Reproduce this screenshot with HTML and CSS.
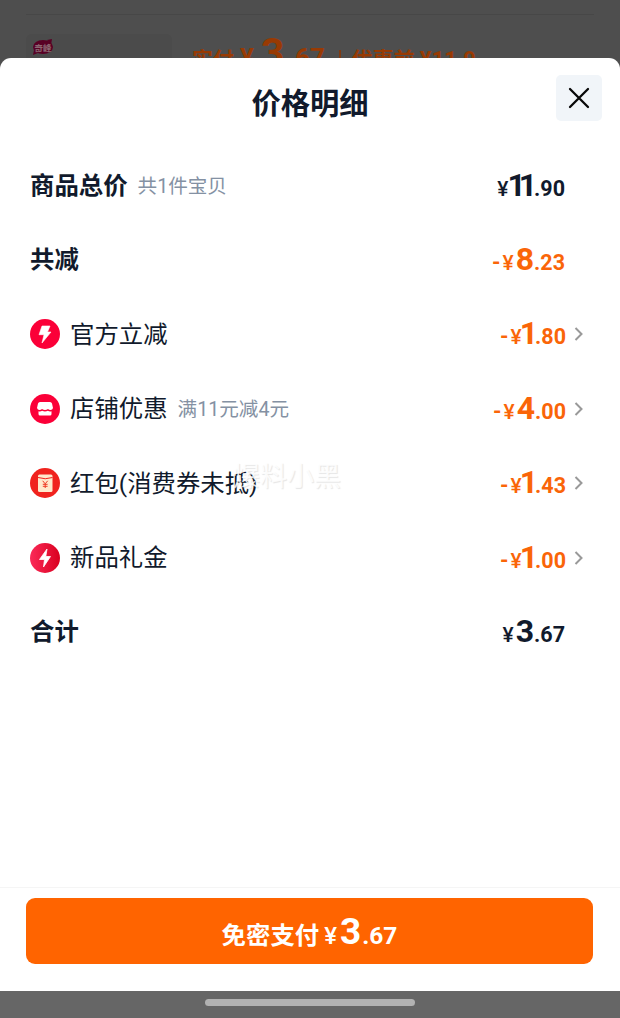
FILE: index.html
```html
<!DOCTYPE html>
<html lang="zh-CN">
<head>
    <meta charset="UTF-8">
    <meta name="viewport" content="width=device-width, initial-scale=1.0">
    <title>价格明细</title>
    <link rel="stylesheet" href="styles.css">
</head>
<body>

<!-- Order page behind the sheet -->
<div class="page">
    <div class="page-line"></div>
    <div class="page-row">
        <div class="thumb">
            <svg width="22" height="18" viewBox="0 0 22 18">
                <ellipse cx="11" cy="9" rx="10" ry="7" fill="#590025"/>
                <path d="M2 12l-1 5 5-2M15 2l5-1-1 6" fill="#590025"/>
                <text x="2.500" y="12.5" class="thumb-text">奇峰</text>
            </svg>
        </div>
        <div class="page-price"><span>实付</span><span class="page-yen">¥</span><span class="page-num">3</span><span class="page-dec">.67</span><span class="page-bar"></span><span>优惠前</span><span class="page-old">¥11.9</span></div>
    </div>
</div>

<!-- Price detail sheet -->
<div class="sheet">
    <div class="header">
        <h1>价格明细</h1>
        <button class="close" aria-label="关闭">
            <svg width="22" height="22" viewBox="0 0 22 22"><path d="M2 2l18 18M20 2L2 20" stroke="#080808" stroke-width="2.3" stroke-linecap="round"/></svg>
        </button>
    </div>

    <div class="list">
        <div class="row total">
            <div class="label">商品总价</div>
            <div class="note">共1件宝贝</div>
            <div class="price"><span class="yen">¥</span><span class="num ones">11</span><span class="dec">.90</span></div>
        </div>
        <div class="row total">
            <div class="label">共减</div>
            <div class="price minus"><span class="sign">-</span><span class="yen">¥</span><span class="num">8</span><span class="dec">.23</span></div>
        </div>
        <div class="row">
            <svg class="icon" viewBox="0 0 30 30"><circle cx="15" cy="15" r="15" fill="#fb0038"/><path d="M12 7h8l-2.500 6H21l-9 11 2-8.300H9z" fill="#fff" stroke="#fff" stroke-width=".6" stroke-linejoin="round"/></svg>
            <div class="label">官方立减</div>
            <div class="price minus"><span class="sign">-</span><span class="yen">¥</span><span class="num one">1</span><span class="dec">.80</span></div>
            <svg class="arrow" viewBox="0 0 10 16"><path d="M1.500 2l6 6-6 6"/></svg>
        </div>
        <div class="row">
            <svg class="icon" viewBox="0 0 30 30"><circle cx="15" cy="15" r="15" fill="#fb0038"/><path d="M10 8h10q1.500 0 2 1.500l1 4.500q-.5 2-2.500 2-1.500 0-2.500-1-1.500 1-3 1t-3-1q-1 1-2.500 1-2 0-2.500-2l1-4.500Q8.500 8 10 8zM8.500 17.300q2 .6 3.600-.5 2.900 1.300 5.800 0 1.600 1.100 3.600.5v2.700q0 1.500-1.500 1.500H10q-1.500 0-1.500-1.500z" fill="#fff"/></svg>
            <div class="label">店铺优惠</div>
            <div class="note">满11元减4元</div>
            <div class="price minus"><span class="sign">-</span><span class="yen">¥</span><span class="num">4</span><span class="dec">.00</span></div>
            <svg class="arrow" viewBox="0 0 10 16"><path d="M1.500 2l6 6-6 6"/></svg>
        </div>
        <div class="row">
            <svg class="icon" viewBox="0 0 30 30"><circle cx="15" cy="15" r="15" fill="#f0231e"/><rect x="8" y="6.500" width="14.500" height="17.500" rx="1.500" fill="#ffe9cc"/><path d="M8 9.500q7.250 2.500 14.500 0" stroke="#f0231e" stroke-width="1" fill="none"/><path d="M12.700 12.800l2.500 3 2.500-3M15.200 15.800V20M12.800 16.300h4.800M12.800 18.300h4.800" stroke="#ee3b24" stroke-width="1" fill="none"/></svg>
            <div class="label">红包(消费券未抵)</div>
            <div class="price minus"><span class="sign">-</span><span class="yen">¥</span><span class="num one">1</span><span class="dec">.43</span></div>
            <svg class="arrow" viewBox="0 0 10 16"><path d="M1.500 2l6 6-6 6"/></svg>
            <div class="watermark">爆料小黑</div>
        </div>
        <div class="row">
            <svg class="icon" viewBox="0 0 30 30">
                <defs><linearGradient id="gift"><stop offset="0" stop-color="#fb2a58"/><stop offset="1" stop-color="#d9001f"/></linearGradient></defs>
                <circle cx="15" cy="15" r="15" fill="url(#gift)"/><path d="M17 6l-1.200 7.500H20.500L13.500 24l1-7.500H9.500z" fill="#fff" stroke="#fff" stroke-width=".8" stroke-linejoin="round"/>
            </svg>
            <div class="label">新品礼金</div>
            <div class="price minus"><span class="sign">-</span><span class="yen">¥</span><span class="num one">1</span><span class="dec">.00</span></div>
            <svg class="arrow" viewBox="0 0 10 16"><path d="M1.500 2l6 6-6 6"/></svg>
        </div>
        <div class="row total">
            <div class="label">合计</div>
            <div class="price"><span class="yen">¥</span><span class="num">3</span><span class="dec">.67</span></div>
        </div>
    </div>

    <div class="footer">
        <button class="pay"><span>免密支付</span><span class="pay-yen">¥</span><span class="pay-num">3</span><span class="pay-dec">.67</span></button>
    </div>
</div>

<div class="nav-bar"><div class="handle"></div></div>

</body>
</html>
```
FILE: styles.css
```css
* {
    box-sizing: border-box;
}

body {
    margin: 0;
    height: 1018px;
    display: flex;
    flex-direction: column;
    overflow: hidden;
    background-color: #666;
    color: #111a2c;
    font-family: Roboto, "Noto Sans CJK SC", sans-serif;
}

button {
    border: none;
    padding: 0;
    font-family: inherit;
    cursor: pointer;
}

.page {
    flex: none;
    height: 72px;
    padding: 14px 26px 0;
    overflow: hidden;
    background-color: #4e4e4e;
}

.page-line {
    height: 1px;
    background-color: #474747;
}

.page-row {
    display: flex;
    margin-top: 19px;
}

.thumb {
    flex: none;
    width: 146px;
    height: 50px;
    padding: 4px 6px;
    border-radius: 6px;
    background-color: #4b4b4b;
}

.thumb-text {
    font-size: 8.5px;
    font-weight: bold;
    fill: #8b6872;
}

.page-price {
    display: flex;
    align-items: baseline;
    margin: -6px 0 0 20px;
    white-space: nowrap;
    color: #983a03;
    font-size: 21px;
    font-weight: bold;
    line-height: 50px;
}

.page-yen {
    margin-left: 6px;
    font-size: 26px;
}

.page-num {
    margin-left: 7px;
    font-size: 41px;
}

.page-dec {
    margin-left: 3px;
    font-size: 26px;
}

.page-bar {
    flex: none;
    width: 2px;
    height: 17px;
    margin: 0 11px 0 14px;
    background-color: #7d3a12;
}

.page-old {
    margin-left: 5px;
    font-size: 22px;
}

.sheet {
    position: relative;
    display: flex;
    flex-direction: column;
    flex: none;
    height: 933px;
    margin-top: -14px;
    border-radius: 11px 11px 0 0;
    background-color: #fff;
}

.header {
    display: flex;
    justify-content: flex-end;
    height: 90px;
    padding: 17px 18px 0 0;
}

h1 {
    flex: 1;
    margin: 6px 0 0 64px;
    text-align: center;
    font-size: 29.3px;
    line-height: 46px;
}

.close {
    display: flex;
    align-items: center;
    justify-content: center;
    width: 46px;
    height: 46px;
    border-radius: 5px;
    background-color: #f1f5f9;
}

.list {
    flex: 1;
    padding: 0 30px;
}

.row {
    position: relative;
    display: flex;
    align-items: center;
    height: 74.4px;
}

.icon {
    width: 30px;
    height: 30px;
    margin: 1px 10px 0 0;
}

.label {
    margin-bottom: 3px;
    font-size: 24.4px;
}

.total .label {
    margin-bottom: 4px;
    font-weight: bold;
}

.note {
    margin: 0 0 2px 10px;
    color: #8491a3;
    font-size: 19.6px;
}

.price {
    display: flex;
    align-items: baseline;
    margin: 3px 25px 0 auto;
    font-size: 21.5px;
    font-weight: bold;
    line-height: 36px;
}

.minus {
    color: #fa6508;
}

.sign {
    margin-right: 2px;
}

.yen {
    margin-right: 2px;
    font-size: 21px;
    font-weight: 500;
}

.num {
    font-size: 32px;
}

.one {
    margin-left: -4px;
    margin-right: -3px;
}

.ones {
    margin-left: -3px;
    margin-right: 4px;
    letter-spacing: -7px;
}

.arrow {
    width: 10px;
    height: 16px;
    margin: 1px 6px 0 -17px;
    fill: none;
    stroke: #999;
    stroke-width: 2;
}

.watermark {
    position: absolute;
    left: 203px;
    top: 9px;
    color: rgba(255, 255, 255, 0.85);
    font-size: 27px;
    line-height: 44px;
    text-shadow: 1px 1px 1px rgba(0, 0, 0, 0.1);
}

.footer {
    height: 104px;
    padding: 10px 27px 0 26px;
    border-top: 1px solid #f5f5f5;
}

.pay {
    display: flex;
    align-items: baseline;
    justify-content: center;
    width: 100%;
    height: 66px;
    border-radius: 9px;
    background-color: #ff6400;
    color: #fff;
    font-size: 24.4px;
    font-weight: bold;
    line-height: 67px;
}

.pay-yen {
    margin: 0 3px 0 5px;
    font-size: 24px;
    font-weight: 500;
}

.pay-num {
    font-size: 37px;
}

.pay-dec {
    margin-left: 1px;
    font-size: 24.5px;
}

.nav-bar {
    display: flex;
    justify-content: center;
    flex: 1;
    padding-top: 8px;
    background-color: #666;
}

.handle {
    width: 210px;
    height: 7px;
    border-radius: 4px;
    background-color: #b2b2b2;
}
```
